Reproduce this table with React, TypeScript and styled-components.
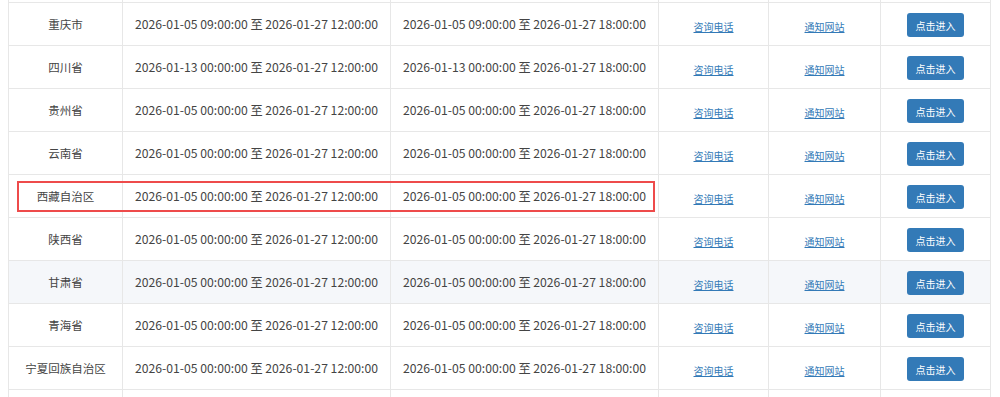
import React from "react"
import styled, { createGlobalStyle } from "styled-components"

const GlobalStyle = createGlobalStyle`
  body {
    margin: 0;
    padding: 0 8px;
    background: #ffffff;
    font-family: "Noto Sans CJK SC", "Microsoft YaHei", sans-serif;
    color: #333333;
  }
`

type Row = {
  name: string
  start: string
  highlight?: boolean
  hover?: boolean
}

const rows: Row[] = [
  { name: "海南省", start: "2026-01-05 00:00:00" },
  { name: "重庆市", start: "2026-01-05 09:00:00" },
  { name: "四川省", start: "2026-01-13 00:00:00" },
  { name: "贵州省", start: "2026-01-05 00:00:00" },
  { name: "云南省", start: "2026-01-05 00:00:00" },
  { name: "西藏自治区", start: "2026-01-05 00:00:00", highlight: true },
  { name: "陕西省", start: "2026-01-05 00:00:00" },
  { name: "甘肃省", start: "2026-01-05 00:00:00", hover: true },
  { name: "青海省", start: "2026-01-05 00:00:00" },
  { name: "宁夏回族自治区", start: "2026-01-05 00:00:00" },
  { name: "新疆维吾尔自治区", start: "2026-01-05 00:00:00" },
]

const widths = [114, 268, 268, 110, 112, 110]

export default function App() {
  return (
    <>
      <GlobalStyle />
      <Viewport>
        <Table>
          <colgroup>
            {widths.map((w, i) => (
              <Col key={i} w={w} />
            ))}
          </colgroup>
          <tbody>
            {rows.map((r) => (
              <Tr key={r.name} hover={r.hover}>
                <NameCell>
                  {r.name}
                  {r.highlight && <Mark />}
                </NameCell>
                <DateCell>{r.start} 至 2026-01-27 12:00:00</DateCell>
                <DateCell>{r.start} 至 2026-01-27 18:00:00</DateCell>
                <Td>
                  <Link href="#">咨询电话</Link>
                </Td>
                <Td>
                  <Link href="#">通知网站</Link>
                </Td>
                <Td>
                  <EnterButton>点击进入</EnterButton>
                </Td>
              </Tr>
            ))}
          </tbody>
        </Table>
      </Viewport>
    </>
  )
}

const Viewport = styled.div`
  width: 983px;
  height: 397px;
  overflow: hidden;
`

const Table = styled.table`
  width: 983px;
  margin-top: -41px;
  border-collapse: collapse;
  table-layout: fixed;
  border: 1px solid #e7e7e7;
`

const Col = styled.col<{ w: number }>`
  width: ${(p) => p.w}px;
`

const Tr = styled.tr<{ hover?: boolean }>`
  height: 43px;
  background: ${(p) => (p.hover ? "#f5f7fa" : "#ffffff")};
`

const Td = styled.td`
  padding: 0;
  border: 1px solid #e7e7e7;
  text-align: center;
  vertical-align: middle;
  white-space: nowrap;
`

const NameCell = styled(Td)`
  position: relative;
  font-size: 11.5px;
  color: #444444;
`

const DateCell = styled(Td)`
  font-size: 12.2px;
  color: #444444;
`

const Link = styled.a`
  font-size: 10px;
  color: #337ab7;
  text-decoration: underline;
`

const EnterButton = styled.button`
  width: 57px;
  height: 24px;
  padding: 0;
  border: none;
  border-radius: 3px;
  background: #337ab7;
  color: #ffffff;
  font-family: "Noto Sans CJK SC", sans-serif;
  font-size: 10px;
  cursor: pointer;
`

const Mark = styled.div`
  position: absolute;
  top: 6px;
  left: 8px;
  width: 638px;
  height: 31px;
  box-sizing: border-box;
  border: 2px solid #ee4b4b;
  pointer-events: none;
`
